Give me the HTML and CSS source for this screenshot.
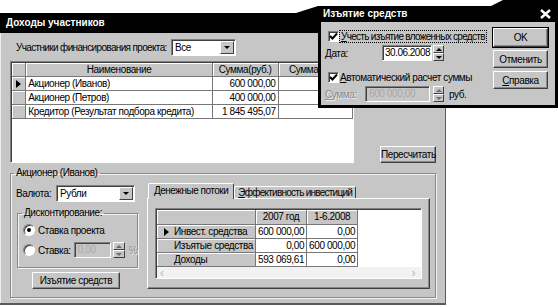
FILE: index.html
```html
<!DOCTYPE html>
<html>
<head>
    <meta charset="utf-8">
    <title>Доходы участников</title>
    <link rel="stylesheet" href="styles.css">
</head>
<body>
<div class="desktop">

    <!-- главное окно -->
    <div class="win main">
        <div class="caption">Доходы участников</div>

        <div class="filter">
            <span class="filter-label">Участники финансирования проекта:</span>
            <div class="combo combo-all"><span class="combo-text">Все</span><span class="drop"><i></i></span></div>
        </div>

        <div class="grid-row">
            <div class="grid members">
                <table>
                    <colgroup><col class="c-ind"><col class="c-name"><col class="c-sum"><col class="c-sum2"></colgroup>
                    <tr class="head"><td></td><td>Наименование</td><td>Сумма(руб.)</td><td>Сумма(руб.)</td></tr>
                    <tr><td class="ind"><i class="arrow"></i></td><td>Акционер (Иванов)</td><td class="num">600 000,00</td><td></td></tr>
                    <tr><td class="ind"></td><td>Акционер (Петров)</td><td class="num">400 000,00</td><td></td></tr>
                    <tr><td class="ind"></td><td>Кредитор (Результат подбора кредита)</td><td class="num">1 845 495,07</td><td></td></tr>
                </table>
            </div>
            <button class="btn recalc">Пересчитать</button>
        </div>

        <fieldset class="group holder">
            <legend>Акционер (Иванов)</legend>
            <div class="holder-body">
                <div class="holder-left">
                    <div class="currency">
                        <span class="currency-label">Валюта:</span>
                        <div class="combo combo-cur"><span class="combo-text">Рубли</span><span class="drop"><i></i></span></div>
                    </div>

                    <fieldset class="group discount">
                        <legend>Дисконтирование:</legend>
                        <div class="radio-row"><span class="radio on"></span>Ставка проекта</div>
                        <div class="radio-row">
                            <span class="radio"></span>Ставка:
                            <div class="edit rate">0,00</div>
                            <div class="spin"><span><i class="up"></i></span><span><i class="down"></i></span></div>
                            <span class="disabled">%</span>
                        </div>
                    </fieldset>

                    <button class="btn withdraw">Изъятие средств</button>
                </div>

                <div class="tabs">
                    <div class="tab-strip">
                        <div class="tab active"><u>Д</u>енежные потоки</div>
                        <div class="tab"><u>Э</u>ффективность инвестиций</div>
                    </div>
                    <div class="tab-panel">
                        <div class="grid flows">
                            <table>
                                <colgroup><col class="c-row"><col class="c-year"><col class="c-year"></colgroup>
                                <tr class="head"><td></td><td>2007 год</td><td>1-6.2008</td></tr>
                                <tr><td class="fixed"><i class="arrow"></i>Инвест. средства</td><td class="num">600 000,00</td><td class="num">0,00</td></tr>
                                <tr><td class="fixed">Изъятые средства</td><td class="num">0,00</td><td class="num">600 000,00</td></tr>
                                <tr><td class="fixed">Доходы</td><td class="num">593 069,61</td><td class="num">0,00</td></tr>
                            </table>
                            <div class="hscroll"><span>&lsaquo;</span><span>&rsaquo;</span></div>
                        </div>
                    </div>
                </div>
            </div>
        </fieldset>
    </div>

    <!-- диалог -->
    <div class="win dialog">
        <div class="caption dlg-caption">
            <span>Изъятие средств</span>
            <svg class="close" width="11" height="10" viewBox="0 0 11 10"><path d="M1 1L10 9M10 1L1 9" stroke="#fff" stroke-width="2.4"/></svg>
        </div>
        <div class="dlg-body">
            <div class="dlg-form">
                <div class="check-row">
                    <span class="check"><svg width="9" height="9" viewBox="0 0 9 9"><path d="M1 4L3.5 6.5L8 1.5" stroke="#000" stroke-width="2" fill="none"/></svg></span>
                    <span class="focus"><u>У</u>честь изъятие вложенных средств</span>
                </div>
                <div class="field-row">
                    <span class="date-label"><u>Д</u>ата:</span>
                    <div class="edit date">30.06.2008</div>
                    <div class="spin"><span><i class="up"></i></span><span><i class="down"></i></span></div>
                </div>
                <div class="check-row auto">
                    <span class="check"><svg width="9" height="9" viewBox="0 0 9 9"><path d="M1 4L3.5 6.5L8 1.5" stroke="#000" stroke-width="2" fill="none"/></svg></span>
                    <span><u>А</u>втоматический расчет суммы</span>
                </div>
                <div class="field-row">
                    <span class="sum-label disabled"><u>С</u>умма:</span>
                    <div class="edit sum off">600 000,00</div>
                    <div class="spin off"><span><i class="up"></i></span><span><i class="down"></i></span></div>
                    <span class="unit">руб.</span>
                </div>
            </div>
            <div class="dlg-buttons">
                <button class="btn default">OK</button>
                <button class="btn">Отменить</button>
                <button class="btn"><u>С</u>правка</button>
            </div>
        </div>
    </div>

</div>
</body>
</html>
```

FILE: styles.css
```css
* {
    box-sizing: border-box;
}

body {
    margin: 0;
    background: #fff;
    font-family: "Liberation Sans", Arial, sans-serif;
    font-size: 10px;
    letter-spacing: -0.4px;
    color: #000;
}

.desktop {
    position: relative;
    width: 558px;
    height: 307px;
    overflow: hidden;
    background: #fff;
    white-space: nowrap;
}

/* окна */
.win {
    position: absolute;
    background: #c6c6c6;
}

.main {
    left: 0;
    top: 13px;
    width: 446px;
    height: 292px;
    border-right: 1px solid #5a5a5a;
    border-bottom: 2px solid #5a5a5a;
    box-shadow: inset 1px 0 #eee;
}

.caption {
    height: 20px;
    background: #000;
    color: #fff;
    font-weight: bold;
    font-size: 10px;
    letter-spacing: 0;
    line-height: 20px;
    padding-left: 6px;
}

/* стандартные контролы */
.btn {
    display: block;
    padding: 0;
    font: inherit;
    letter-spacing: inherit;
    color: #000;
    background: #c6c6c6;
    border: 1px solid;
    border-color: #fff #404040 #404040 #fff;
    box-shadow: inset -1px -1px #888;
    text-align: center;
    white-space: nowrap;
}

.combo {
    display: flex;
    height: 17px;
    background: #fff;
    border: 1px solid;
    border-color: #808080 #fff #fff #808080;
    box-shadow: inset 1px 1px #404040;
    padding: 1px 1px 1px 2px;
}

.combo-text {
    flex: 1;
    line-height: 14px;
    padding-left: 1px;
}

.drop, .spin span {
    display: flex;
    align-items: center;
    justify-content: center;
    background: #c6c6c6;
    border: 1px solid;
    border-color: #fff #404040 #404040 #fff;
}

.drop {
    width: 14px;
}

.drop i, .spin .down {
    width: 0;
    height: 0;
    border-left: 3px solid transparent;
    border-right: 3px solid transparent;
    border-top: 3px solid #000;
}

.spin .up {
    width: 0;
    height: 0;
    border-left: 3px solid transparent;
    border-right: 3px solid transparent;
    border-bottom: 3px solid #000;
}

.spin {
    display: flex;
    flex-direction: column;
    width: 11px;
    height: 16px;
}

.spin span {
    flex: 1;
}

.spin.off i {
    opacity: .45;
}

.edit {
    height: 16px;
    background: #fff;
    border: 1px solid;
    border-color: #808080 #fff #fff #808080;
    box-shadow: inset 1px 1px #404040;
    line-height: 14px;
    padding: 0 3px;
    overflow: hidden;
}

.edit.off {
    background: #c6c6c6;
    color: #a8a8a8;
}

.disabled {
    color: #8a8a8a;
    text-shadow: 1px 1px #eee;
}

/* верх */
.filter {
    display: flex;
    align-items: center;
    margin-top: 6px;
    padding-left: 16px;
    height: 17px;
}

.filter-label {
    width: 155px;
    letter-spacing: -0.65px;
}

.combo-all {
    width: 65px;
}

.grid-row {
    display: flex;
    align-items: flex-end;
    margin-top: 5px;
    padding-left: 10px;
}

.grid {
    background: #fff;
    border: 1px solid;
    border-color: #808080 #fff #fff #808080;
    box-shadow: inset 1px 1px #404040;
    padding: 1px 0 0 1px;
    overflow: hidden;
}

.grid table {
    border-collapse: collapse;
    table-layout: fixed;
}

.grid td {
    padding: 0 2px;
    border-right: 1px solid #777;
    border-bottom: 1px solid #777;
    white-space: nowrap;
    overflow: hidden;
    line-height: 13px;
}

.grid .head td, .grid .ind, .grid .fixed {
    background: #c6c6c6;
    box-shadow: inset 1px 1px #fff;
    text-align: center;
}

.grid .num {
    text-align: right;
}

.arrow {
    display: inline-block;
    width: 0;
    height: 0;
    border-left: 5px solid #000;
    border-top: 4px solid transparent;
    border-bottom: 4px solid transparent;
    vertical-align: -1px;
}

.members {
    width: 344px;
    height: 102px;
}

.members .head td {
    height: 13px;
}

.members td {
    height: 14px;
}

.c-ind { width: 14px; }
.c-name { width: 187px; }
.c-sum { width: 66px; }
.c-sum2 { width: 75px; }

.recalc {
    margin-left: 26px;
    width: 56px;
    height: 17px;
}

/* группы */
.group {
    margin: 0;
    padding: 0;
    border: 1px solid #8a8a8a;
    box-shadow: inset 1px 1px #f2f2f2, 1px 1px #f2f2f2;
}

.group legend {
    padding: 0 2px;
    margin-left: 3px;
    line-height: 12px;
}

.holder {
    margin: 4px 0 0 10px;
    width: 426px;
    height: 131px;
}

.holder-body {
    display: flex;
    padding-left: 5px;
}

.holder-left {
    width: 122px;
}

.currency {
    display: flex;
    align-items: center;
    margin-top: 6px;
}

.currency-label {
    width: 40px;
}

.combo-cur {
    width: 79px;
}

.discount {
    margin: 5px 0 0 1px;
    width: 120px;
    height: 61px;
}

.discount legend {
    margin-left: 4px;
}

.radio-row {
    display: flex;
    align-items: center;
    height: 16px;
    margin-top: 3px;
    padding-left: 5px;
}

.radio-row + .radio-row {
    margin-top: 4px;
}

.radio {
    width: 12px;
    height: 12px;
    margin-right: 3px;
    border-radius: 50%;
    background: #fff;
    border: 1px solid;
    border-color: #808080 #fff #fff #808080;
    box-shadow: inset 1px 1px #404040;
    display: flex;
    align-items: center;
    justify-content: center;
}

.radio.on::after {
    content: "";
    width: 4px;
    height: 4px;
    border-radius: 50%;
    background: #000;
}

.rate {
    width: 37px;
    margin-left: 3px;
    background: #c6c6c6;
    color: #aaa;
}

.discount .spin {
    margin-left: 2px;
    width: 12px;
}

.discount .spin i {
    opacity: .45;
}

.discount .disabled {
    margin-left: 4px;
}

.withdraw {
    margin: 4px 0 0 16px;
    width: 88px;
    height: 17px;
}

/* вкладки */
.tabs {
    margin: 4px 0 0 9px;
    width: 283px;
}

.tab-strip {
    display: flex;
    align-items: flex-end;
    height: 15px;
    padding-left: 1px;
}

.tab {
    height: 12px;
    line-height: 11px;
    padding: 0 3px;
    letter-spacing: -0.75px;
    background: #c6c6c6;
    border: 1px solid;
    border-bottom: none;
    border-color: #fff #404040 #404040 #fff;
    border-radius: 2px 2px 0 0;
}

.tab.active {
    position: relative;
    z-index: 1;
    height: 16px;
    line-height: 14px;
    margin-bottom: -1px;
    padding: 0 5px;
    letter-spacing: -0.5px;
}

.tab-panel {
    height: 91px;
    border: 1px solid;
    border-color: #fff #404040 #404040 #fff;
    box-shadow: inset -1px -1px #888;
    padding: 9px 7px;
}

.flows {
    height: 71px;
}

.flows .head td {
    height: 14px;
}

.flows td {
    height: 14px;
}

.flows .fixed {
    text-align: left;
    padding-left: 7px;
}

.flows .fixed .arrow {
    margin-right: 5px;
}

.flows tr:not(:nth-child(2)) .fixed {
    padding-left: 17px;
}

.c-row { width: 93px; }
.c-year { width: 47px; }

.hscroll {
    display: flex;
    justify-content: space-between;
    height: 13px;
    background: #f2f2f2;
    color: #b8b8b8;
    font-size: 12px;
    line-height: 12px;
    padding: 0 6px 0 3px;
}

/* диалог */
.dialog {
    left: 318px;
    top: 0;
    width: 240px;
    height: 108px;
    background: none;
}

/* скос, соединяющий заголовки окон */
.dialog::before {
    content: "";
    position: absolute;
    left: -22px;
    top: 6px;
    border-right: 22px solid #000;
    border-top: 7px solid transparent;
}

.dlg-caption {
    display: flex;
    justify-content: space-between;
    align-items: center;
    height: 22px;
    padding: 6px 7px 0 5px;
    clip-path: polygon(0 6px, 173px 6px, 185px 0, 100% 0, 100% 100%, 0 100%);
}

.dlg-body {
    display: flex;
    height: 86px;
    background: #c6c6c6;
    border: 3px solid #000;
    border-top: none;
    padding: 8px 7px 0 4px;
}

.dlg-form {
    flex: 1;
    min-width: 0;
}

.check-row {
    display: flex;
    align-items: center;
    height: 13px;
}

.check {
    display: flex;
    align-items: center;
    justify-content: center;
    width: 11px;
    height: 11px;
    margin: 0 1px 0 3px;
    background: #fff;
    border: 1px solid;
    border-color: #808080 #fff #fff #808080;
    box-shadow: inset 1px 1px #404040;
}

.focus {
    outline: 1px dotted #000;
    padding: 0 1px;
    letter-spacing: -0.7px;
}

.field-row {
    display: flex;
    align-items: center;
    margin-top: 2px;
}

.auto {
    margin-top: 10px;
}

.date-label {
    width: 57px;
}

.date {
    width: 50px;
    padding: 0 2px;
    letter-spacing: -0.5px;
}

.field-row .spin {
    margin-left: 1px;
}

.sum-label {
    width: 40px;
}

.sum {
    width: 65px;
}

.sum + .spin {
    margin-left: 3px;
}

.unit {
    margin-left: 5px;
}

.dlg-buttons {
    flex: none;
    display: flex;
    flex-direction: column;
    gap: 3px;
    margin-top: -2px;
}

.dlg-buttons .btn {
    width: 55px;
    height: 18px;
}

.dlg-buttons .default {
    height: 19px;
    outline: 1px solid #000;
}
```
